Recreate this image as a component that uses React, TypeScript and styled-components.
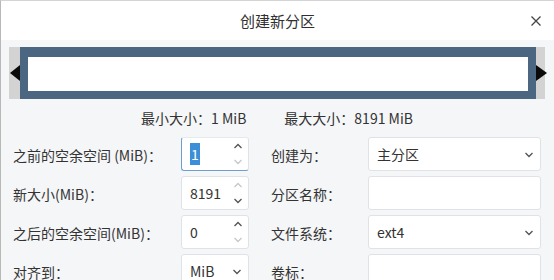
import styled, { createGlobalStyle } from 'styled-components';

const GlobalStyle = createGlobalStyle`
  html, body {
    margin: 0;
    padding: 0;
    background: #ffffff;
  }
  body {
    font-family: 'Noto Sans CJK SC', 'Noto Sans', sans-serif;
    color: #333333;
  }
`;

const Dialog = styled.div`
  width: 554px;
  height: 280px;
  overflow: hidden;
  box-sizing: border-box;
  border-top: 1px solid #d4d4d4;
  border-left: 1px solid #b8b8b8;
  background: #f5f6f8;
  display: flex;
  flex-direction: column;
`;

const TitleBar = styled.div`
  height: 39px;
  flex: none;
  background: #ffffff;
  display: flex;
  align-items: center;
  justify-content: center;
  position: relative;
  font-size: 15px;
  color: #2f2f2f;
`;

const CloseButton = styled.span`
  position: absolute;
  right: 12px;
  top: 14px;
  width: 12px;
  height: 12px;
  display: flex;
`;

const Body = styled.div`
  padding: 7px 9px 0 8px;
  display: flex;
  flex-direction: column;
`;

const Track = styled.div`
  height: 52px;
  background: #d3d3d3;
  display: flex;
  align-items: center;
`;

const ArrowCell = styled.div<{ side: 'left' | 'right' }>`
  width: ${(p) => (p.side === 'left' ? '11px' : '9px')};
  height: 100%;
  display: flex;
  align-items: center;
  overflow: visible;
`;

const Triangle = styled.div<{ side: 'left' | 'right' }>`
  width: 0;
  height: 0;
  border-top: 8px solid transparent;
  border-bottom: 8px solid transparent;
  ${(p) =>
    p.side === 'left'
      ? 'border-right: 10px solid #0a0a0a; margin-left: 1px;'
      : 'border-left: 11px solid #0a0a0a;'}
`;

const Partition = styled.div`
  flex: 1;
  height: 100%;
  box-sizing: border-box;
  background: #4b6680;
  padding: 10px 8px 8px 8px;
  display: flex;
`;

const PartitionInner = styled.div`
  flex: 1;
  background: #ffffff;
`;

const SizeRow = styled.div`
  display: flex;
  justify-content: center;
  gap: 38px;
  height: 38px;
  align-items: center;
  font-size: 14px;
  color: #333333;
`;

const Form = styled.div`
  display: grid;
  grid-template-columns: 168px 68px 22px 97px 173px;
  grid-auto-rows: 34px;
  row-gap: 5px;
  padding-left: 4px;
`;

const Label = styled.div`
  display: flex;
  align-items: center;
  font-size: 14px;
  color: #333333;
  padding-top: 2px;
`;

const Spacer = styled.div``;

const Box = styled.div<{ focused?: boolean }>`
  box-sizing: border-box;
  background: #ffffff;
  border: 1px solid #dfe2e6;
  border-radius: 3px;
  display: flex;
  align-items: center;
  padding-left: 8px;
  font-size: 14px;
  color: #333333;
  position: relative;
  ${(p) =>
    p.focused
      ? 'border-left-color: #6f9fcf; border-bottom-color: #6f9fcf; border-top-color: #e6e9ee;'
      : ''}
`;

const Value = styled.span<{ selected?: boolean }>`
  ${(p) =>
    p.selected
      ? 'background: #3d8ed8; color: #ffffff; padding: 0 1px; line-height: 22px;'
      : ''}
`;

const Steppers = styled.div`
  position: absolute;
  right: 4px;
  top: 3px;
  bottom: 3px;
  width: 12px;
  display: flex;
  flex-direction: column;
  justify-content: space-between;
  align-items: center;
`;

const Chevron = styled.svg<{ dim?: boolean }>`
  width: 10px;
  height: 10px;
  color: ${(p) => (p.dim ? '#c4c8cd' : '#505357')};
`;

const SelectChevron = styled.svg`
  position: absolute;
  right: 6px;
  top: 12px;
  width: 10px;
  height: 10px;
  color: #505357;
`;

function Up({ dim }: { dim?: boolean }) {
  return (
    <Chevron dim={dim} viewBox="0 0 10 10">
      <path d="M1.5 7 L5 3.5 L8.5 7" fill="none" stroke="currentColor" strokeWidth="1.3" />
    </Chevron>
  );
}

function Down({ dim }: { dim?: boolean }) {
  return (
    <Chevron dim={dim} viewBox="0 0 10 10">
      <path d="M1.5 3 L5 6.5 L8.5 3" fill="none" stroke="currentColor" strokeWidth="1.3" />
    </Chevron>
  );
}

function Caret() {
  return (
    <SelectChevron viewBox="0 0 10 10">
      <path d="M1.5 3 L5 6.5 L8.5 3" fill="none" stroke="currentColor" strokeWidth="1.3" />
    </SelectChevron>
  );
}

function SpinBox({
  value,
  upDim,
  downDim,
  focused,
}: {
  value: string;
  upDim?: boolean;
  downDim?: boolean;
  focused?: boolean;
}) {
  return (
    <Box focused={focused}>
      <Value selected={focused}>{value}</Value>
      <Steppers>
        <Up dim={upDim} />
        <Down dim={downDim} />
      </Steppers>
    </Box>
  );
}

function SelectBox({ value }: { value: string }) {
  return (
    <Box>
      {value}
      <Caret />
    </Box>
  );
}

export default function App() {
  return (
    <>
      <GlobalStyle />
      <Dialog>
        <TitleBar>
          创建新分区
          <CloseButton>
            <svg viewBox="0 0 12 12" width="12" height="12">
              <path d="M1.5 1.5 L10.5 10.5 M10.5 1.5 L1.5 10.5" stroke="#444" strokeWidth="1.3" />
            </svg>
          </CloseButton>
        </TitleBar>
        <Body>
          <Track>
            <ArrowCell side="left">
              <Triangle side="left" />
            </ArrowCell>
            <Partition>
              <PartitionInner />
            </Partition>
            <ArrowCell side="right">
              <Triangle side="right" />
            </ArrowCell>
          </Track>
          <SizeRow>
            <span>最小大小：1 MiB</span>
            <span>最大大小：8191 MiB</span>
          </SizeRow>
          <Form>
            <Label>之前的空余空间 (MiB)：</Label>
            <SpinBox value="1" focused downDim />
            <Spacer />
            <Label>创建为：</Label>
            <SelectBox value="主分区" />

            <Label>新大小(MiB)：</Label>
            <SpinBox value="8191" upDim />
            <Spacer />
            <Label>分区名称：</Label>
            <Box />

            <Label>之后的空余空间(MiB)：</Label>
            <SpinBox value="0" downDim />
            <Spacer />
            <Label>文件系统：</Label>
            <SelectBox value="ext4" />

            <Label>对齐到：</Label>
            <SelectBox value="MiB" />
            <Spacer />
            <Label>卷标：</Label>
            <Box />
          </Form>
        </Body>
      </Dialog>
    </>
  );
}
